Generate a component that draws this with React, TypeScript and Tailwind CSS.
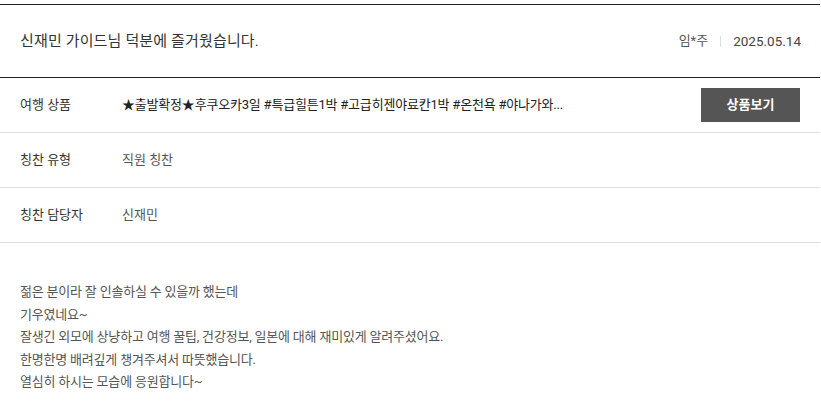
import React from "react";

const font = { fontFamily: 'Roboto, "Noto Sans CJK KR", sans-serif' };

export default function App() {
  const rows: [string, React.ReactNode][] = [
    ["칭찬 유형", "직원 칭찬"],
    ["칭찬 담당자", "신재민"],
  ];
  return (
    <div className="w-[821px] h-[416px] bg-white pt-[4px]" style={font}>
      <div className="w-[820px]">
        <div className="border-t border-b border-[#222] h-[74px] flex items-center justify-between px-5">
          <div className="text-[15px] text-[#333] tracking-[0.15px]">신재민 가이드님 덕분에 즐거웠습니다.</div>
          <div className="flex items-center text-[13px] text-[#555] -mr-[1px]">
            <span>임*주</span>
            <span className="mx-[12px] w-px h-[11px] bg-[#ddd]" />
            <span className="text-[13.5px] text-[#444]">2025.05.14</span>
          </div>
        </div>
        <div className="flex items-center h-[55px] border-b border-[#ddd] pl-5 pr-5 text-[13px] text-[#333]">
          <div className="w-[102px]">여행 상품</div>
          <div className="flex-1 text-[#222] tracking-[-0.2px]">★출발확정★후쿠오카3일 #특급힐튼1박 #고급히젠야료칸1박 #온천욕 #야나가와...</div>
          <button className="w-[99px] h-[34px] bg-[#555] text-white text-[13px] font-bold">상품보기</button>
        </div>
        {rows.map(([k, v]) => (
          <div key={k} className="flex items-center h-[55px] border-b border-[#ddd] px-5 text-[13px]">
            <div className="w-[102px] text-[#333]">{k}</div>
            <div className="text-[#555]">{v}</div>
          </div>
        ))}
        <div className="px-5 pt-[38px] text-[13px] leading-[22.5px] text-[#555] tracking-[-0.2px]">
          <p>젊은 분이라 잘 인솔하실 수 있을까 했는데</p>
          <p>기우였네요~</p>
          <p>잘생긴 외모에 상냥하고 여행 꿀팁, 건강정보, 일본에 대해 재미있게 알려주셨어요.</p>
          <p>한명한명 배려깊게 챙겨주셔서 따뜻했습니다.</p>
          <p>열심히 하시는 모습에 응원합니다~</p>
        </div>
      </div>
    </div>
  );
}
